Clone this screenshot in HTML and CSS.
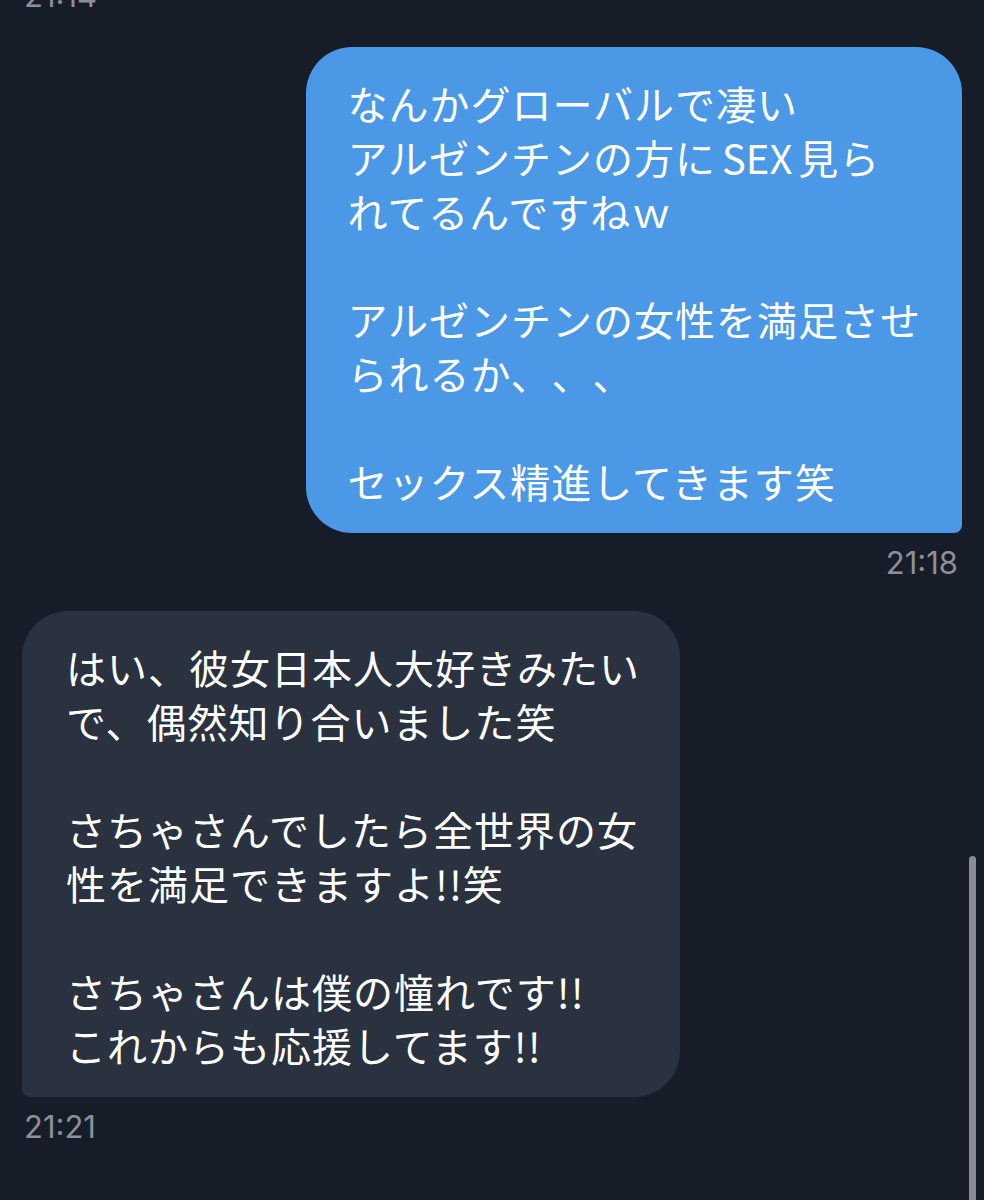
FILE: index.html
```html
<!DOCTYPE html>
<html lang="ja">
<head>
    <meta charset="UTF-8">
    <meta name="viewport" content="width=device-width, initial-scale=1.0">
    <title>メッセージ</title>
    <link rel="stylesheet" href="styles.css">
</head>
<body>
    <div class="chat">
        <div class="time time-first">21:14</div>

        <div class="message sent">
            <div class="bubble bubble-sent">
                なんかグローバルで凄い<br>
                アルゼンチンの方に<span class="latin">SEX</span>見ら<br>
                れてるんですねｗ<br>
                <br>
                アルゼンチンの女性を満足させ<br>
                られるか、、、<br>
                <br>
                セックス精進してきます笑
            </div>
            <div class="time">21:18</div>
        </div>

        <div class="message received">
            <div class="bubble bubble-received">
                はい、彼女日本人大好きみたい<br>
                で、偶然知り合いました笑<br>
                <br>
                さちゃさんでしたら全世界の女<br>
                性を満足できますよ!!笑<br>
                <br>
                さちゃさんは僕の憧れです!!<br>
                これからも応援してます!!
            </div>
            <div class="time">21:21</div>
        </div>
    </div>

    <div class="scrollbar"></div>
</body>
</html>
```

FILE: styles.css
```css
html, body {
    margin: 0;
    height: 100%;
    overflow: hidden;
}

body {
    background-color: #161d29;
    font-family: "Noto Sans CJK JP", "Noto Sans", sans-serif;
    color: #fff;
    position: relative;
}

.chat {
    display: flex;
    flex-direction: column;
    padding: 0 22px;
}

.time {
    font-family: Inter, "Liberation Sans", sans-serif;
    font-size: 31px;
    line-height: 34px;
    color: #8c9099;
    margin-top: 13px;
}

.time-first {
    margin-top: -21px;
    padding-left: 2px;
}

.message {
    display: flex;
    flex-direction: column;
}

.sent {
    align-items: flex-end;
    margin-top: 34px;
}

.sent .time {
    padding-right: 4px;
}

.received {
    align-items: flex-start;
    margin-top: 31px;
}

.received .time {
    padding-left: 2px;
}

.bubble {
    font-size: 40px;
    line-height: 54px;
    letter-spacing: 1px;
    white-space: nowrap;
    text-spacing-trim: space-all;
    padding-top: 29px;
    padding-bottom: 25px;
}

.latin {
    margin: 0 6px;
    letter-spacing: 0;
}

.bubble-sent {
    background-color: #4b98e6;
    border-radius: 46px 46px 8px 46px;
    padding-left: 41px;
    padding-right: 41px;
}

.bubble-received {
    background-color: #29323e;
    border-radius: 46px 46px 46px 8px;
    padding-left: 44px;
    padding-right: 40px;
}

.scrollbar {
    position: absolute;
    right: 8px;
    top: 856px;
    bottom: 0;
    width: 7px;
    border-radius: 4px 4px 0 0;
    background-color: #898c93;
}
```
